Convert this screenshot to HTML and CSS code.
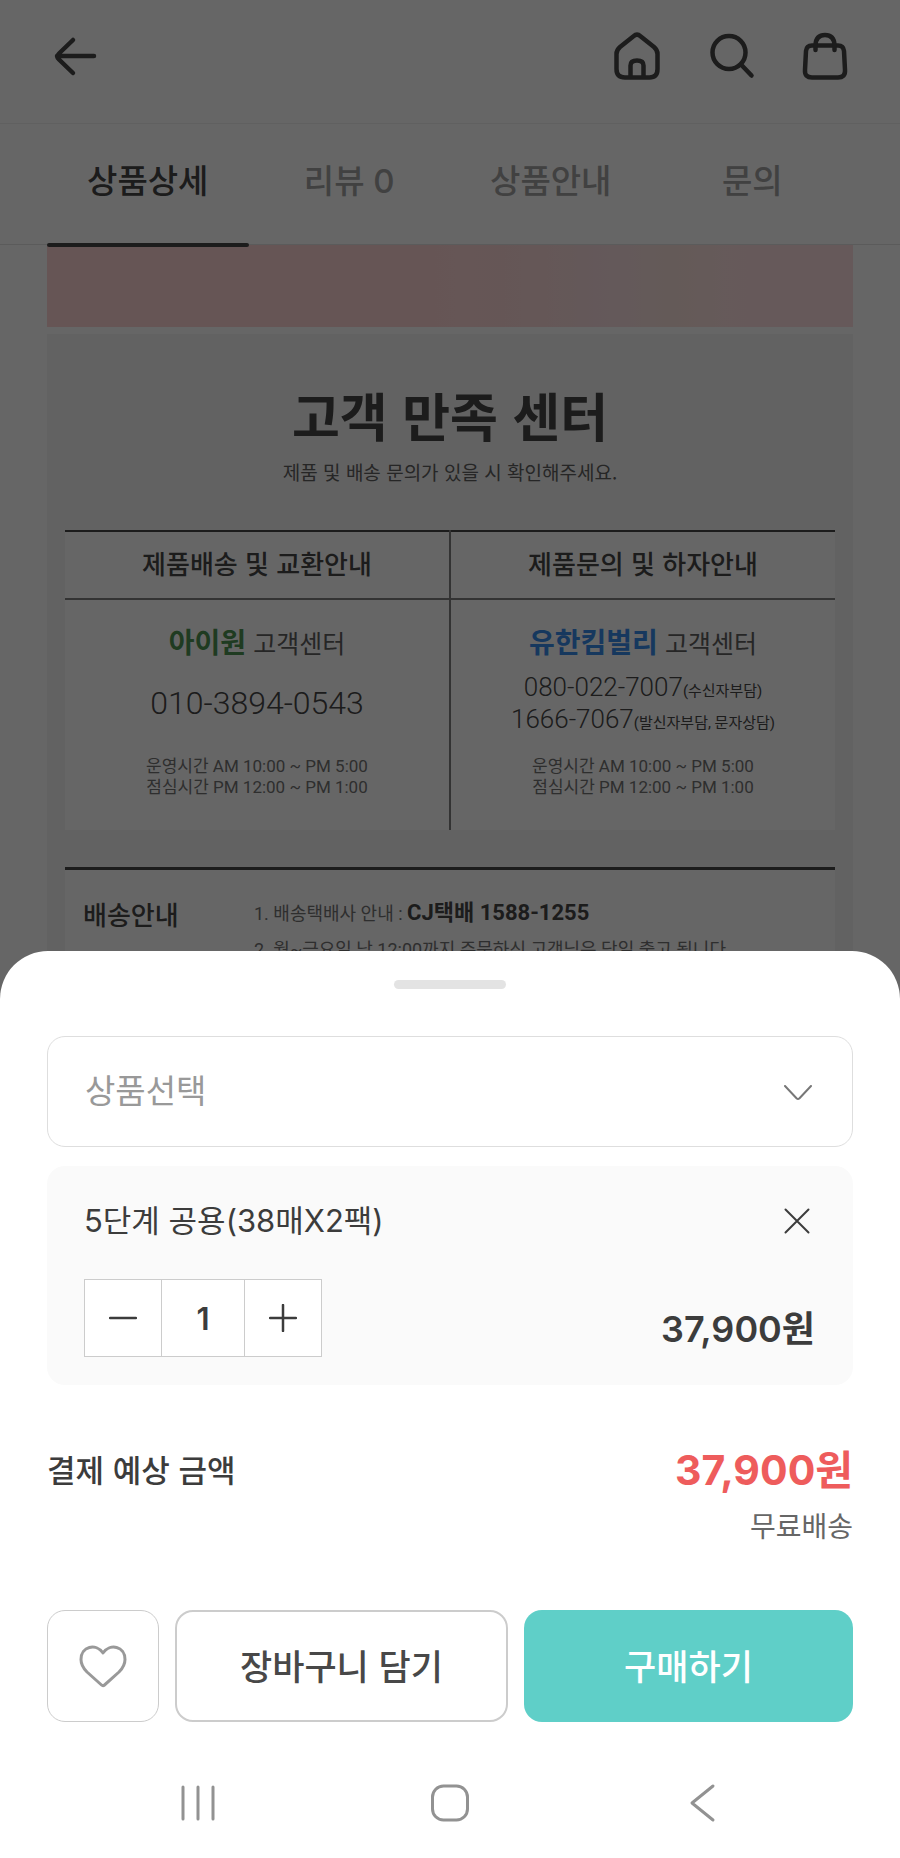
FILE: index.html
```html
<!DOCTYPE html>
<html lang="ko">
<head>
<meta charset="utf-8">
<meta name="viewport" content="width=device-width, initial-scale=1">
<title>상품상세</title>
<link rel="stylesheet" href="styles.css">
</head>
<body>
<div class="page">
  <header class="topbar">
    <button class="icon-btn" type="button" aria-label="뒤로">
      <svg class="icon" viewBox="0 0 48 48"><path d="M43 24H6M22 8 8 21.500Q5 24.500 8 27.500L22 41"/></svg>
    </button>
    <div class="topbar-actions">
      <button class="icon-btn" type="button" aria-label="홈">
        <svg class="icon" viewBox="0 0 48 48"><path d="M20.500 4.200Q24 1.200 27.500 4.200L41 15Q44.500 18 44.500 22V37Q44.500 45.500 36.500 45.500H12Q3.500 45.500 3.500 37V22Q3.500 18 7 15ZM17.500 45V33.500Q17.500 28.500 24 28.500T30.500 33.500V45"/></svg>
      </button>
      <button class="icon-btn" type="button" aria-label="검색">
        <svg class="icon" viewBox="0 0 48 48"><circle cx="22" cy="20.500" r="16.500"/><path d="m34 32.500 10.500 11"/></svg>
      </button>
      <button class="icon-btn" type="button" aria-label="장바구니">
        <svg class="icon" viewBox="0 0 48 48"><path d="M11 13.500H37Q42.500 13.500 43 19L44 38Q44.500 45.500 37 45.500H11Q3.500 45.500 4 38L5 19Q5.500 13.500 11 13.500Z"/><path d="M14.500 18V13Q15 3 24 3T33.500 13V18"/></svg>
      </button>
    </div>
  </header>
  <nav class="tabs">
    <a class="tab tab-active" href="#detail">상품상세</a>
    <a class="tab" href="#review">리뷰 0</a>
    <a class="tab" href="#guide">상품안내</a>
    <a class="tab" href="#qna">문의</a>
  </nav>
  <main class="detail" id="detail">
    <div class="banner"></div>
    <section class="support">
      <h1 class="support-title">고객 만족 센터</h1>
      <p class="support-lead">제품 및 배송 문의가 있을 시 확인해주세요.</p>
      <table class="centers">
        <thead>
          <tr><th scope="col">제품배송 및 교환안내</th><th scope="col">제품문의 및 하자안내</th></tr>
        </thead>
        <tbody>
          <tr>
            <td>
              <p class="center-name"><strong class="brand-green">아이원</strong> 고객센터</p>
              <p class="phone-single">010-3894-0543</p>
              <p class="hours">운영시간 AM 10:00 ~ PM 5:00<br>점심시간 PM 12:00 ~ PM 1:00</p>
            </td>
            <td>
              <p class="center-name"><strong class="brand-blue">유한킴벌리</strong> 고객센터</p>
              <p class="phone-pair">080-022-7007<small>(수신자부담)</small><br>1666-7067<small>(발신자부담, 문자상담)</small></p>
              <p class="hours">운영시간 AM 10:00 ~ PM 5:00<br>점심시간 PM 12:00 ~ PM 1:00</p>
            </td>
          </tr>
        </tbody>
      </table>
      <div class="delivery">
        <h2 class="delivery-title">배송안내</h2>
        <ol class="delivery-list">
          <li>1. 배송택배사 안내 : <strong>CJ택배 1588-1255</strong></li>
          <li>2. 월~금요일 낮 12:00까지 주문하신 고객님은 당일 출고 됩니다.</li>
        </ol>
      </div>
    </section>
  </main>
</div>
<div class="scrim"></div>
<section class="sheet" aria-label="옵션 선택">
  <div class="handle"></div>
  <div class="sheet-body">
    <div class="picker">
      <select class="picker-select" aria-label="상품선택"><option>상품선택</option></select>
      <svg class="picker-arrow" viewBox="0 0 28 16"><path d="m1 1 11.500 12.300q1.500 1.400 3 0L27 1"/></svg>
    </div>
    <div class="item">
      <div class="item-row">
        <span class="item-name">5단계 공용(38매X2팩)</span>
        <button class="item-remove" type="button" aria-label="삭제"><svg viewBox="0 0 26 26"><path d="m1.500 1.500 23 23m0-23-23 23"/></svg></button>
      </div>
      <div class="item-row">
        <div class="stepper">
          <button class="step" type="button" aria-label="수량 빼기"><svg viewBox="0 0 28 28"><path d="M1 14H27"/></svg></button>
          <input class="step-value" type="text" value="1" aria-label="수량">
          <button class="step" type="button" aria-label="수량 더하기"><svg viewBox="0 0 28 28"><path d="M1 14H27M14 1V27"/></svg></button>
        </div>
        <span class="item-price">37,900원</span>
      </div>
    </div>
    <div class="total">
      <span class="total-label">결제 예상 금액</span>
      <div class="total-values">
        <strong class="total-price">37,900원</strong>
        <span class="total-ship">무료배송</span>
      </div>
    </div>
    <div class="actions">
      <button class="btn-like" type="button" aria-label="찜하기"><svg viewBox="0 0 48 44"><path d="M24 9C17 -1 2 2 2 15.500C2 21 5 25 8 28L22.500 41Q24 42.300 25.500 41L40 28C43 25 46 21 46 15.500C46 2 31 -1 24 9Z"/></svg></button>
      <button class="btn btn-cart" type="button">장바구니 담기</button>
      <button class="btn btn-buy" type="button">구매하기</button>
    </div>
  </div>
  <nav class="sysnav">
    <button class="sys-btn" type="button" aria-label="최근 앱"><svg viewBox="0 0 40 40"><path d="M5 4V36M20 4V36M35 4V36"/></svg></button>
    <button class="sys-btn" type="button" aria-label="홈 화면"><svg viewBox="0 0 40 40"><rect x="2.500" y="3" width="35" height="34" rx="11"/></svg></button>
    <button class="sys-btn" type="button" aria-label="이전"><svg viewBox="0 0 40 40"><path d="M31 3 10 20 31 37"/></svg></button>
  </nav>
</section>
</body>
</html>
```
FILE: styles.css
```css
* { box-sizing: border-box; }
html, body { height: 100%; }
body {
  margin: 0;
  overflow: hidden;
  background: #fff;
  color: #464646;
  font-family: "Noto Sans CJK KR", sans-serif;
}
h1, h2, p, ol { margin: 0; padding: 0; }
button, input, select { font: inherit; color: inherit; }
button { padding: 0; border: 0; background: none; }
svg { display: block; fill: none; stroke: currentColor; stroke-linecap: round; stroke-linejoin: round; }

.topbar {
  display: flex;
  justify-content: space-between;
  padding: 32px 51px 43px;
  border-bottom: 1px solid #f0f0f0;
}
.topbar-actions { display: flex; gap: 46px; }
.icon { width: 48px; height: 48px; stroke-width: 4.5; }

.tabs {
  display: grid;
  grid-template-columns: repeat(4, 1fr);
  padding: 0 47px;
  border-bottom: 1px solid #e4e4e4;
}
.tab {
  position: relative;
  height: 120px;
  line-height: 114px;
  text-align: center;
  font-family: Inter, "Noto Sans CJK KR", sans-serif;
  font-size: 33px;
  font-weight: 500;
  color: #a2a2a2;
  text-decoration: none;
}
.tab-active { color: #464646; }
.tab-active::after {
  content: "";
  position: absolute;
  left: 0;
  right: 0;
  bottom: -3px;
  height: 4px;
  border-radius: 2px;
  background: #464646;
}

.detail { padding: 0 47px; }
.banner {
  height: 82px;
  margin-bottom: 7px;
  background: linear-gradient(90deg, #ffd5d5 0%, #ffd5d5 48%, #fcdada 62%, #fadee2 70%, #fbe2dc 78%, #ffdfe2 87%, #ffdfe2 100%);
}
.support { padding: 39px 18px 0; background: #f4f4f4; }
.support-title { text-align: center; font-size: 52px; line-height: 84px; font-weight: 700; }
.support-lead { text-align: center; font-size: 19px; line-height: 29px; font-weight: 400; color: #606060; }

.centers {
  width: 100%;
  margin: 44px 0 37px;
  border-collapse: collapse;
  table-layout: fixed;
  border-top: 2px solid #464646;
  background: #fff;
  text-align: center;
}
.centers th { height: 68px; padding: 0 0 4px; border-bottom: 2px solid #808080; font-size: 26px; line-height: 36px; font-weight: 500; }
.centers td { height: 231px; padding: 20px 0 0; vertical-align: top; }
.centers th + th, .centers td + td { border-left: 2px solid #808080; }
.center-name { font-size: 25px; line-height: 42px; font-weight: 400; color: #606060; }
.center-name strong { font-size: 28px; font-weight: 700; }
.center-name .brand-green { color: #4f9454; }
.center-name .brand-blue { color: #388cec; }
.phone-single, .phone-pair, .hours, .delivery-list { font-family: Roboto, "Noto Sans CJK KR", sans-serif; }
.phone-single { height: 76px; padding-top: 10px; font-size: 32px; line-height: 60px; font-weight: 300; }
.phone-pair { height: 76px; padding-top: 8px; font-size: 26px; line-height: 32px; font-weight: 300; }
.phone-pair small { font-size: 15px; line-height: 1; font-weight: 400; }
.hours { padding-top: 17px; font-size: 17px; line-height: 21px; font-weight: 400; color: #747474; }

.delivery {
  display: grid;
  grid-template-columns: 171px 1fr;
  padding: 25px 18px;
  border-top: 3px solid #464646;
  background: #fff;
}
.delivery-title { font-size: 26px; line-height: 38px; font-weight: 500; }
.delivery-list { list-style: none; font-size: 18px; line-height: 36px; font-weight: 400; color: #747474; }
.delivery-list strong { font-size: 22px; font-weight: 700; color: #464646; }

.scrim { position: fixed; inset: 0; background: rgba(0, 0, 0, 0.6); }

.sheet {
  position: fixed;
  left: 0;
  right: 0;
  bottom: 0;
  padding-top: 29px;
  border-radius: 48px 48px 0 0;
  background: #fff;
  color: #3c3c3c;
}
.handle { width: 112px; height: 9px; margin: 0 auto 47px; border-radius: 5px; background: #e3e3e3; }
.sheet-body { padding: 0 47px; }
.picker { position: relative; margin-bottom: 19px; }
.picker-select {
  display: block;
  width: 100%;
  height: 111px;
  padding: 0 37px 6px;
  appearance: none;
  border: 1px solid #dedede;
  border-radius: 18px;
  background: #fff;
  color: #999;
  font-size: 33px;
}
.picker-arrow { position: absolute; right: 41px; top: 49px; width: 28px; height: 16px; stroke: #777; stroke-width: 2; }

.item {
  display: flex;
  flex-direction: column;
  gap: 34px;
  padding: 31px 38px 28px 37px;
  border-radius: 18px;
  background: #fafafa;
}
.item-row { display: flex; justify-content: space-between; align-items: center; }
.item-name, .item-price, .total-price, .step-value { font-family: Inter, "Noto Sans CJK KR", sans-serif; }
.item-name { font-size: 31px; line-height: 48px; }
.item-remove svg { width: 26px; height: 26px; margin-right: 5px; stroke-width: 2; }
.stepper {
  display: grid;
  grid-template-columns: 1fr 84px 1fr;
  width: 238px;
  height: 78px;
  border: 1px solid #ccc;
  background: #fff;
}
.step { display: grid; place-items: center; }
.step svg { width: 28px; height: 28px; stroke-width: 2.5; }
.step-value {
  width: 100%;
  min-width: 0;
  padding: 0;
  border: solid #ccc;
  border-width: 0 1px;
  text-align: center;
  font-size: 31px;
  font-weight: 600;
}
.item-price { padding-top: 22px; font-size: 36px; line-height: 48px; font-weight: 600; }

.total { display: flex; justify-content: space-between; padding: 55px 0 60px; }
.total-label { font-size: 31px; line-height: 58px; font-weight: 500; }
.total-values { display: flex; flex-direction: column; align-items: flex-end; }
.total-price { font-size: 41px; line-height: 60px; font-weight: 700; color: #ee5c5c; }
.total-ship { font-size: 28px; line-height: 50px; color: #666; }

.actions { display: flex; gap: 16px; }
.btn-like, .btn { height: 112px; border-radius: 18px; }
.btn-like { flex: 0 0 112px; display: grid; place-items: center; border: 1px solid #ccc; color: #999; }
.btn-like svg { width: 48px; height: 44px; stroke-width: 3; }
.btn { flex: 1 1 0; padding-bottom: 4px; font-size: 35px; font-weight: 500; }
.btn-cart { border: 2px solid #ccc; color: #484848; }
.btn-buy { background: #5fcfc8; color: #fff; }

.sysnav { display: grid; grid-template-columns: repeat(3, 1fr); padding: 61px 72px 35px; }
.sys-btn { display: grid; place-items: center; color: #929292; }
.sys-btn svg { width: 40px; height: 40px; stroke-width: 3; }
```
